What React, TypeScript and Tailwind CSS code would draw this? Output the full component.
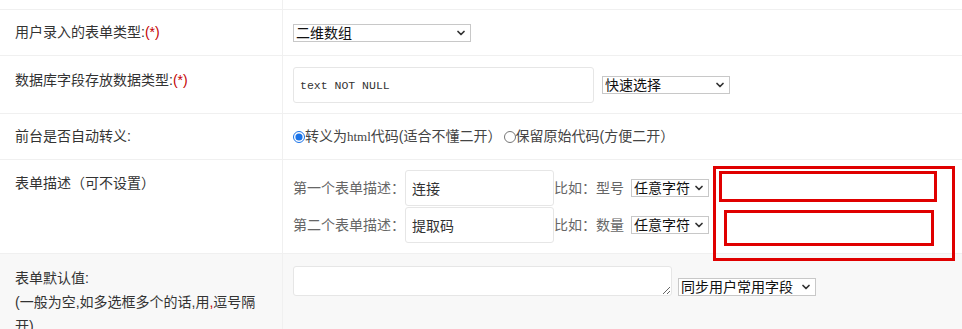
import { ChevronDown } from "lucide-react";

function Select({ value, className }: { value: string; className: string }) {
  return (
    <span
      className={`relative inline-flex h-[18px] shrink-0 items-center border border-[#c8c8c8] bg-white ${className}`}
    >
      <select className="h-full w-full appearance-none bg-transparent pl-[2px] pr-[16px] text-[14px] leading-[16px] text-[#111] outline-none">
        <option>{value}</option>
      </select>
      <ChevronDown
        className="pointer-events-none absolute right-[3px] top-1/2 -translate-y-1/2 text-[#333]"
        size={12}
        strokeWidth={3.5}
      />
    </span>
  );
}

function Required() {
  return <span className="text-[#c40000]">(*)</span>;
}

export default function App() {
  return (
    <div className="relative h-[329px] w-[962px] overflow-hidden bg-white font-['Liberation_Sans','Noto_Sans_CJK_SC',sans-serif] text-[14px] text-[#333]">
      {/* tail of the previous row */}
      <div className="flex h-[9px]">
        <div className="w-[283px] shrink-0 border-r border-[#f0f0f0]" />
      </div>

      {/* 表单类型 */}
      <div className="flex h-[46px] border-t border-[#f0f0f0]">
        <div className="w-[283px] shrink-0 border-r border-[#f0f0f0] px-[15px] pt-[11px] leading-[22px]">
          用户录入的表单类型:<Required />
        </div>
        <div className="flex-1 pl-[10px] pt-[13px]">
          <Select value="二维数组" className="w-[178px]" />
        </div>
      </div>

      {/* 字段类型 */}
      <div className="flex h-[58px] border-t border-[#f0f0f0]">
        <div className="w-[283px] shrink-0 border-r border-[#f0f0f0] px-[15px] pt-[13px] leading-[22px]">
          数据库字段存放数据类型:<Required />
        </div>
        <div className="flex flex-1 items-center gap-[8px] pl-[10px] pt-[1px]">
          <input
            defaultValue="text NOT NULL"
            className="h-[36px] w-[301px] rounded-[3px] border border-[#e6e6e6] bg-white px-[6px] font-['Liberation_Mono',monospace] text-[11.5px] text-[#333] outline-none"
          />
          <Select value="快速选择" className="w-[128px]" />
        </div>
      </div>

      {/* 自动转义 */}
      <div className="flex h-[46px] border-t border-[#f0f0f0]">
        <div className="w-[283px] shrink-0 border-r border-[#f0f0f0] px-[15px] pt-[11px] leading-[22px]">
          前台是否自动转义:
        </div>
        <div className="flex flex-1 items-center pl-[10px] text-[14px] text-[#444]">
          <label className="flex items-center">
            <input
              type="radio"
              name="escape"
              defaultChecked
              className="m-0 size-[12px] accent-[#1a73e8]"
            />
            <span>
              转义为<span className="font-['Liberation_Serif',serif] text-[13px]">html</span>代码(适合不懂二开）
            </span>
          </label>
          <label className="ml-[2px] flex items-center">
            <input type="radio" name="escape" className="m-0 size-[12px]" />
            <span>保留原始代码(方便二开）</span>
          </label>
        </div>
      </div>

      {/* 表单描述 */}
      <div className="flex h-[94px] border-t border-[#f0f0f0]">
        <div className="w-[283px] shrink-0 border-r border-[#f0f0f0] px-[15px] pt-[12px] leading-[22px]">
          表单描述（可不设置）
        </div>
        <div className="flex flex-1 flex-col gap-[1px] pl-[10px] pt-[10px] text-[#666]">
          <div className="flex h-[36px] items-center">
            <span>第一个表单描述：</span>
            <input
              defaultValue="连接"
              className="h-[36px] w-[149px] rounded-[3px] border border-[#e6e6e6] bg-white px-[6px] text-[14px] text-[#333] outline-none"
            />
            <span>比如：型号</span>
            <Select value="任意字符" className="ml-[7px] w-[78px]" />
          </div>
          <div className="flex h-[36px] items-center">
            <span>第二个表单描述：</span>
            <input
              defaultValue="提取码"
              className="h-[36px] w-[149px] rounded-[3px] border border-[#e6e6e6] bg-white px-[6px] text-[14px] text-[#333] outline-none"
            />
            <span>比如：数量</span>
            <Select value="任意字符" className="ml-[7px] w-[78px]" />
          </div>
        </div>
      </div>

      {/* 默认值 */}
      <div className="flex h-[80px] border-t border-[#f0f0f0] bg-[#f8f8f8]">
        <div className="w-[283px] shrink-0 border-r border-[#f0f0f0] px-[15px] pt-[12px] leading-[24px]">
          表单默认值:
          <br />
          (一般为空,如多选框多个的话,用<span className="text-[#c40000]">,</span>逗号隔
          <br />
          开)
        </div>
        <div className="flex flex-1 items-end gap-[6px] self-start pl-[10px] pt-[12px]">
          <textarea className="h-[30px] w-[379px] rounded-[3px] border border-[#e6e6e6] bg-white outline-none" />
          <Select value="同步用户常用字段" className="w-[138px]" />
        </div>
      </div>

      {/* red annotation marks */}
      <div className="pointer-events-none absolute left-[713px] top-[166px] h-[95px] w-[242px] border-[3px] border-[#e00000]" />
      <div className="pointer-events-none absolute left-[719px] top-[171px] h-[31px] w-[218px] border-[3px] border-[#e00000]" />
      <div className="pointer-events-none absolute left-[724px] top-[210px] h-[36px] w-[210px] border-[3px] border-[#e00000]" />
    </div>
  );
}
